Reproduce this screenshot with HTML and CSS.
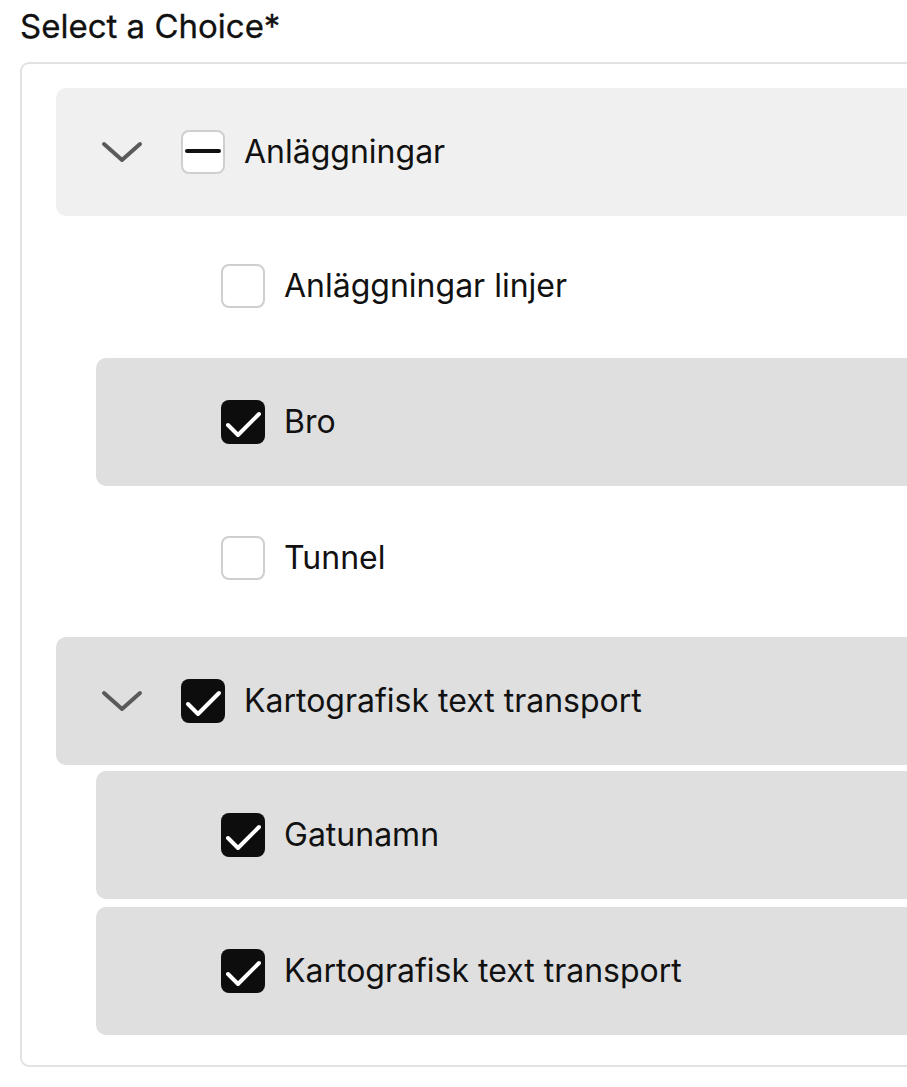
FILE: index.html
```html
<!DOCTYPE html>
<html lang="sv">
<head>
<meta charset="utf-8">
<title>Select a Choice</title>
<link rel="stylesheet" href="styles.css">
</head>
<body>
<div class="field">
  <div class="label">Select a Choice*</div>
  <div class="panel">
    <div class="group">
      <div class="row header light">
        <span class="chev"><svg width="44" height="24" viewBox="0 0 44 24"><polyline points="4,4 22,20 40,4" fill="none" stroke="#5a5a5a" stroke-width="4" stroke-linecap="round" stroke-linejoin="round"/></svg></span>
        <span class="box indet"><svg width="44" height="44" viewBox="0 0 44 44"><line x1="6" y1="21" x2="38" y2="21" stroke="#111" stroke-width="4" stroke-linecap="round"/></svg></span>
        <span class="text">Anläggningar</span>
      </div>
      <div class="children">
        <div class="row child">
          <span class="chev"></span>
          <span class="box"></span>
          <span class="text">Anläggningar linjer</span>
        </div>
        <div class="row child dark">
          <span class="chev"></span>
          <span class="box checked"><svg width="44" height="44" viewBox="0 0 44 44"><polyline points="7,25 17,35 38,14" fill="none" stroke="#fff" stroke-width="4" stroke-linecap="round" stroke-linejoin="round"/></svg></span>
          <span class="text">Bro</span>
        </div>
        <div class="row child">
          <span class="chev"></span>
          <span class="box"></span>
          <span class="text">Tunnel</span>
        </div>
      </div>
    </div>
    <div class="group">
      <div class="row header dark">
        <span class="chev"><svg width="44" height="24" viewBox="0 0 44 24"><polyline points="4,4 22,20 40,4" fill="none" stroke="#5a5a5a" stroke-width="4" stroke-linecap="round" stroke-linejoin="round"/></svg></span>
        <span class="box checked"><svg width="44" height="44" viewBox="0 0 44 44"><polyline points="7,25 17,35 38,14" fill="none" stroke="#fff" stroke-width="4" stroke-linecap="round" stroke-linejoin="round"/></svg></span>
        <span class="text">Kartografisk text transport</span>
      </div>
      <div class="children">
        <div class="row child dark">
          <span class="chev"></span>
          <span class="box checked"><svg width="44" height="44" viewBox="0 0 44 44"><polyline points="7,25 17,35 38,14" fill="none" stroke="#fff" stroke-width="4" stroke-linecap="round" stroke-linejoin="round"/></svg></span>
          <span class="text">Gatunamn</span>
        </div>
        <div class="row child dark">
          <span class="chev"></span>
          <span class="box checked"><svg width="44" height="44" viewBox="0 0 44 44"><polyline points="7,25 17,35 38,14" fill="none" stroke="#fff" stroke-width="4" stroke-linecap="round" stroke-linejoin="round"/></svg></span>
          <span class="text">Kartografisk text transport</span>
        </div>
      </div>
    </div>
  </div>
</div>
</body>
</html>
```
FILE: styles.css
```css
html, body {
  margin: 0;
  padding: 0;
  overflow: hidden;
  background: #fff;
}
body {
  font-family: Inter, "Liberation Sans", sans-serif;
  color: #111;
}
.field {
  padding: 6px 0 0 20px;
  width: 1000px;
}
.label {
  font-size: 33px;
  font-weight: 400;
  -webkit-text-stroke: 0.3px #111;
  line-height: 40px;
  margin-bottom: 16px;
}
.panel {
  border: 2px solid #e2e2e2;
  border-radius: 9px;
  padding: 24px 0 30px 34px;
  display: flex;
  flex-direction: column;
  gap: 15px;
}
.group {
  display: flex;
  flex-direction: column;
  gap: 6px;
}
.children {
  display: flex;
  flex-direction: column;
  gap: 8px;
  padding-left: 40px;
}
.row {
  height: 128px;
  display: flex;
  align-items: center;
  border-radius: 10px 0 0 10px;
  padding-left: 44px;
  box-sizing: border-box;
}
.light { background: #f0f0f0; }
.dark { background: #dfdfdf; }
.chev {
  width: 44px;
  height: 24px;
  display: flex;
  margin-right: 37px;
}
.box {
  width: 44px;
  height: 44px;
  box-sizing: border-box;
  border: 2px solid #cfcfcf;
  border-radius: 8px;
  background: #fff;
  display: flex;
  align-items: center;
  justify-content: center;
  margin-right: 19px;
  flex: none;
}
.box svg { display: block; flex: none; }
.box.indet svg { margin: -2px; }
.box.checked {
  background: #0d0d0d;
  border: none;
}
.text {
  font-size: 32px;
  line-height: 40px;
}
```
